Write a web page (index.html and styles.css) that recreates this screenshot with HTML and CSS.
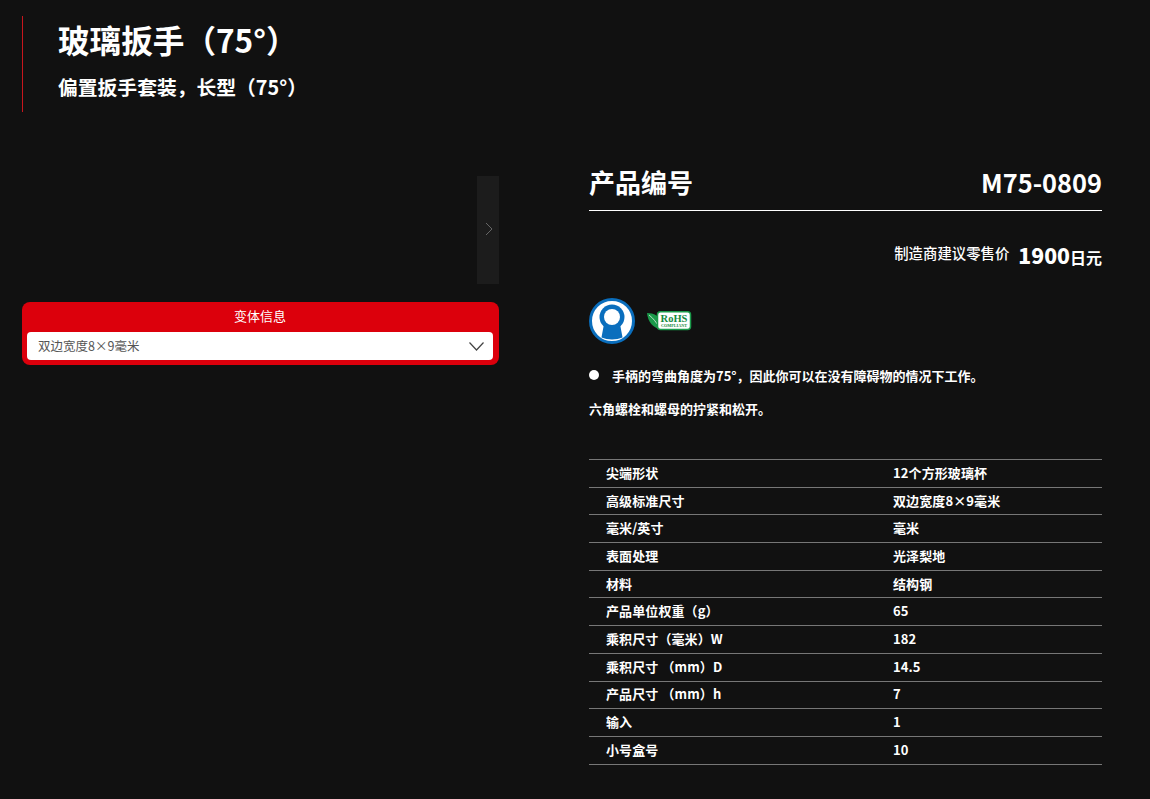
FILE: index.html
```html
<!DOCTYPE html>
<html lang="zh-CN">
<head>
<meta charset="utf-8">
<title>玻璃扳手（75°）</title>
<link rel="stylesheet" href="styles.css">
</head>
<body>
<header class="head">
  <h1 class="title">玻璃扳手（75°）</h1>
  <h2 class="subtitle">偏置扳手套装，长型（75°）</h2>
</header>
<main class="main">
  <section class="left">
    <div class="gallery">
      <div class="next">
        <svg width="8" height="14" viewBox="0 0 8 14"><path d="M1 1l6 6-6 6" fill="none" stroke="#666" stroke-width="1"/></svg>
      </div>
    </div>
    <div class="variant">
      <div class="variant-label">变体信息</div>
      <div class="select">
        <span>双边宽度8×9毫米</span>
        <svg width="15" height="9" viewBox="0 0 15 9"><path d="M0.5 0.5L7.500 8l7-7.500" fill="none" stroke="#444" stroke-width="1.200"/></svg>
      </div>
    </div>
  </section>
  <section class="right">
    <div class="code-row">
      <div>产品编号</div>
      <div class="code">M75-0809</div>
    </div>
    <div class="price-row">
      <span class="price-label">制造商建议零售价</span>
      <span class="price"><b>1900</b>日元</span>
    </div>
    <div class="badges">
      <svg class="badge-tool" width="46" height="46" viewBox="0 0 46 46">
        <circle cx="23" cy="23" r="21.500" fill="#fff" stroke="#0a6ebd" stroke-width="3"/>
        <circle cx="23" cy="19" r="12.500" fill="#0a6ebd"/>
        <path d="M15 26h16l2.500 13.500c-6 2.500-15 2.500-21 0z" fill="#0a6ebd"/>
        <circle cx="23" cy="19" r="8" fill="#fff"/>
      </svg>
      <svg class="badge-rohs" width="46" height="20" viewBox="0 0 46 20">
        <path d="M0 2c7 0 12 3 14 8 1 3 0 6-1 8C6 17 1 11 0 2z" fill="#1a9a4a"/>
        <path d="M2 4c4 3 7 7 11 13" fill="none" stroke="#fff" stroke-width="0.700"/>
        <rect x="10.500" y="0.800" width="33" height="17.700" rx="3" fill="#fff" stroke="#1a9a4a" stroke-width="1.500"/>
        <text x="27" y="10.500" class="rohs-big">RoHS</text>
        <text x="27" y="15.500" class="rohs-small">COMPLIANT</text>
      </svg>
    </div>
    <ul class="features">
      <li>手柄的弯曲角度为75°，因此你可以在没有障碍物的情况下工作。</li>
    </ul>
    <p class="note">六角螺栓和螺母的拧紧和松开。</p>
    <table class="specs">
      <tr><th>尖端形状</th><td>12个方形玻璃杯</td></tr>
      <tr><th>高级标准尺寸</th><td>双边宽度8×9毫米</td></tr>
      <tr><th>毫米/英寸</th><td>毫米</td></tr>
      <tr><th>表面处理</th><td>光泽梨地</td></tr>
      <tr><th>材料</th><td>结构钢</td></tr>
      <tr><th>产品单位权重（g）</th><td>65</td></tr>
      <tr><th>乘积尺寸（毫米）W</th><td>182</td></tr>
      <tr><th>乘积尺寸 （mm）D</th><td>14.5</td></tr>
      <tr><th>产品尺寸 （mm）h</th><td>7</td></tr>
      <tr><th>输入</th><td>1</td></tr>
      <tr><th>小号盒号</th><td>10</td></tr>
    </table>
  </section>
</main>
</body>
</html>
```

FILE: styles.css
```css
* { box-sizing: border-box; }
html, body { margin: 0; height: 100%; }
body {
  background: #111;
  color: #fff;
  font-family: "Noto Sans CJK SC", "Noto Sans", sans-serif;
  overflow: hidden;
}
.head {
  margin: 16px 0 0 22px;
  height: 96px;
  padding-left: 35px;
  border-left: 1px solid #c8161d;
}
.title {
  margin: 0;
  font-size: 31.600px;
  line-height: 46px;
  font-weight: 700;
}
.subtitle {
  margin: 10px 0 0;
  font-size: 19.800px;
  line-height: 30px;
  font-weight: 700;
}
.main {
  display: flex;
  align-items: flex-start;
  padding: 64px 48px 0 22px;
}
.left { width: 477px; }
.gallery {
  display: flex;
  justify-content: flex-end;
  height: 108px;
}
.next {
  width: 22px;
  height: 108px;
  padding: 0 0 2px 1px;
  background: #1c1c1c;
  display: flex;
  align-items: center;
  justify-content: center;
}
.variant {
  margin-top: 18px;
  height: 63px;
  background: #dc000c;
  border-radius: 8px;
  padding: 0 6px 5px 5px;
}
.variant-label {
  height: 30px;
  line-height: 28px;
  text-align: center;
  font-size: 13px;
}
.select {
  height: 28px;
  background: #fff;
  border-radius: 4px;
  padding: 0 9px 0 11px;
  display: flex;
  align-items: center;
  justify-content: space-between;
  color: #555;
  font-size: 12.500px;
}
.select span { line-height: 26px; }
.right {
  width: 513px;
  margin-left: 90px;
}
.code-row {
  display: flex;
  justify-content: space-between;
  align-items: flex-start;
  height: 34px;
  border-bottom: 1px solid #fff;
  box-sizing: content-box;
  font-size: 26px;
  font-weight: 700;
  line-height: 12px;
}
.code { font-size: 25.400px; }
.price-row {
  display: flex;
  justify-content: flex-end;
  align-items: flex-start;
  margin-top: 28px;
  height: 35px;
  font-weight: 700;
}
.price-label { font-size: 14.400px; font-weight: 500; margin-right: 9px; line-height: 28px; }
.price { font-size: 16px; line-height: 32px; }
.price b { font-size: 21.200px; }
.badges {
  display: flex;
  align-items: center;
  margin-top: 24px;
  gap: 12px;
}
.rohs-big { font: 700 10.500px "Liberation Serif", serif; fill: #148a40; text-anchor: middle; }
.rohs-small { font: 700 4.200px "Liberation Serif", serif; fill: #148a40; text-anchor: middle; }
.features {
  list-style: none;
  margin: 22px 0 0;
  padding: 0 0 0 23px;
  font-size: 13px;
  font-weight: 700;
  line-height: 19px;
  position: relative;
}
.features li::before {
  content: "";
  position: absolute;
  left: 0;
  top: 4px;
  width: 10px;
  height: 10px;
  border-radius: 50%;
  background: #fff;
}
.note {
  margin: 14px 0 0;
  font-size: 13px;
  font-weight: 700;
  line-height: 20px;
}
.specs {
  width: 100%;
  margin-top: 40px;
  border-collapse: collapse;
  border-top: 1px solid #777;
  font-size: 13px;
  letter-spacing: 0.100px;
  font-weight: 700;
}
.specs tr { border-bottom: 1px solid #777; height: 27.700px; }
.specs th, .specs td { padding: 0 0 2px; text-align: left; font-weight: 700; }
.specs th { width: 304px; padding-left: 17px; }
```
